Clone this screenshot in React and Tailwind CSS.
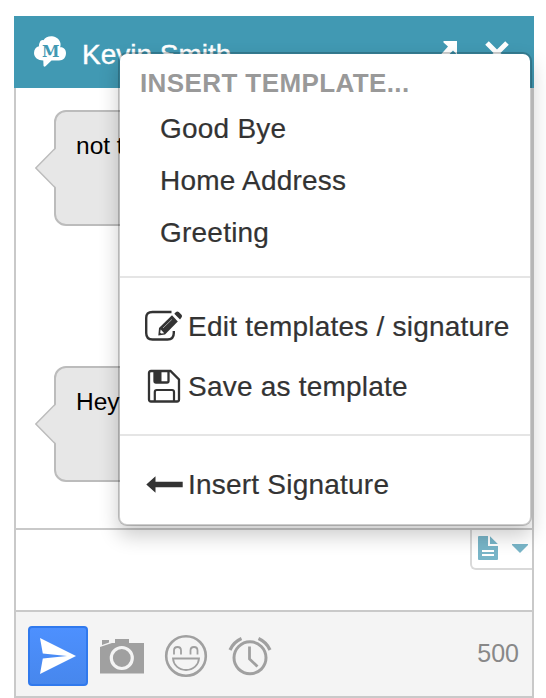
import React from "react";

const LogoIcon = () => (
  <svg width="34" height="34" viewBox="0 0 34 34" className="shrink-0">
    <path
      fill="#fff"
      d="M7 7C7.500 5.500 9 4.800 10.500 5.200C12 2.200 15.500 1 19 1.200C23.500 1.500 26.800 4.500 27.500 8.500C27.700 9.700 27.600 11 27.200 12.200C30.500 11.800 33 14.500 33 18C33 22.500 30.500 25.500 26 25.500H18.500L12.500 31.300C11.500 32 10.500 31.600 10.500 30.500L10.300 25.500C5 25.500 1 22.500 1 18C1 14.500 3 12 6 11.300C5.800 9.800 6.200 8.500 7 7Z"
    />
    <text x="9" y="21.700" fontSize="16.500" fontWeight="700" fill="#4199b3" className="font-['DejaVu_Serif',serif]" textLength="17.500" lengthAdjust="spacingAndGlyphs">M</text>
  </svg>
);

const PopOutIcon = () => (
  <svg width="26" height="26" viewBox="0 0 26 26">
    <path d="M6.500 1H20v13.500l-4-4L7 19.500l-4-4L11 6.500 6.500 2.500Z" fill="#fff" />
  </svg>
);

const CloseIcon = () => (
  <svg width="26" height="26" viewBox="0 0 26 26">
    <path d="M3 3l20 20M23 3L3 23" stroke="#fff" strokeWidth="5" />
  </svg>
);

const EditIcon = () => (
  <svg width="40" height="32" viewBox="0 0 40 32" className="shrink-0">
    <path d="M27.500 2H8.500Q2.200 2 2.200 8V23Q2.200 29.500 8.500 29.500H23.500Q29.800 29.500 29.800 23V21" fill="none" stroke="#333" strokeWidth="2.400" />
    <path d="M14.300 25.500L15 18L28 5.300L33.800 11.500L21 24.500Z" fill="#333" />
    <path d="M30.300 3.800L32 2Q33.300.8 34.800 2L37.500 4.700Q38.700 6 37.500 7.500L36 9.500Z" fill="#333" />
    <path d="M16.700 19.500L20.200 23.200L17.200 23.600L16.200 22.700Z" fill="#fff" />
    <path d="M19 18L27.800 9.500" stroke="#bbb" strokeWidth=".8" />
  </svg>
);

const SaveIcon = () => (
  <svg width="34" height="34" viewBox="0 0 34 34" className="shrink-0">
    <path d="M4 2H23.500L32 10.500V30.500Q32 32.500 30 32.500H4Q2 32.500 2 30.500V4Q2 2 4 2Z" fill="none" stroke="#333" strokeWidth="2.300" />
    <path d="M7.500 2V12Q7.500 13.500 9 13.500H20Q21.500 13.500 21.500 12V2" fill="none" stroke="#333" strokeWidth="2.300" />
    <path d="M7 2h7.500v12H7z" fill="#333" />
    <path d="M7.800 32V23Q7.800 21 9.800 21H25Q27 21 27 23V32" fill="none" stroke="#333" strokeWidth="2.200" />
  </svg>
);

const ArrowIcon = () => (
  <svg width="37" height="17" viewBox="0 0 37 17" className="shrink-0">
    <path d="M.3 8.500L9.500.3V5.800H36.700V11.300H9.500V16.700Z" fill="#333" />
  </svg>
);

const DocIcon = () => (
  <svg width="20" height="24" viewBox="0 0 20 24">
    <path d="M1 0H10V10H20V23Q20 24 19 24H1Q0 24 0 23V1Q0 0 1 0Z" fill="#78b5c8" />
    <path d="M12 0.300L19.800 8H12Z" fill="#78b5c8" />
    <path d="M4 14h12v2H4zM4 18h12v2H4z" fill="#fff" />
  </svg>
);

const SendIcon = () => (
  <svg width="38" height="38" viewBox="0 0 38 38">
    <path d="M1 1L37 19L1 37L3.800 21.600L28 19L3.800 16.500Z" fill="#fff" />
  </svg>
);

const CameraIcon = () => (
  <svg width="44" height="36" viewBox="0 0 44 36">
    <path d="M2 2h7v2.500L2 7zM0 9L12 5h3V1h14v4h15v30.500H0Z" fill="#a0a0a0" />
    <circle cx="21.800" cy="20" r="10.500" fill="none" stroke="#f4f4f4" strokeWidth="3.200" />
  </svg>
);

const SmileIcon = () => (
  <svg width="44" height="44" viewBox="0 0 44 44" fill="none" stroke="#a0a0a0">
    <circle cx="22" cy="22" r="19.800" strokeWidth="2.600" />
    <path d="M10 20.500V16.500C10 11.800 17 11.800 17 16.500V20.500M26.500 20.500V16.500C26.500 11.800 33.500 11.800 33.500 16.500V20.500" strokeWidth="1.800" />
    <path d="M9 24.500H35C34.500 31 29.500 36 22 36C14.500 36 9.500 31 9 24.500Z" strokeWidth="1.800" />
  </svg>
);

const ClockIcon = () => (
  <svg width="44" height="42" viewBox="0 0 44 42" fill="none" stroke="#a0a0a0">
    <circle cx="22" cy="22.800" r="16" strokeWidth="3" />
    <path d="M21.500 11.500V24L29.500 31.500" strokeWidth="2.800" />
    <path d="M2 15Q5.500 7 13.500 3.500M42 15Q38.500 7 30.500 3.500" strokeWidth="3.200" />
  </svg>
);

const Bubble = ({ children }) => (
  <div className="relative ml-[38px] h-[116px] w-[440px] rounded-[12px] border-2 border-[#bcbcbc] bg-[#e7e7e7] px-5 pt-[19px] text-[24.500px] leading-[30px] text-black">
    <svg width="22" height="42" viewBox="0 0 22 42" className="absolute -left-[21px] top-[35px]">
      <path d="M21.500 1L1 21L21.500 41Z" fill="#e7e7e7" />
      <path d="M20 1.500L.8 21L20 40.500" fill="none" stroke="#bcbcbc" strokeWidth="1.500" />
    </svg>
    {children}
  </div>
);

const Menu = () => (
  <div className="absolute left-[118px] top-[52px] h-[474px] w-[414px] rounded-[9px] border-2 border-black/20 bg-white bg-clip-padding text-[28px] tracking-[0.22px] text-[#333] shadow-[0_10px_20px_rgba(0,0,0,0.2)] [-webkit-text-stroke:0.2px_#333]">
    <div className="pl-5 pt-[13px] text-[26px] font-bold leading-[32px] tracking-[0.4px] text-[#999] [-webkit-text-stroke:0px]">INSERT TEMPLATE...</div>
    <ul className="pl-10 pt-1 leading-[52px]">
      <li>Good Bye</li>
      <li>Home Address</li>
      <li>Greeting</li>
    </ul>
    <hr className="mt-[17px] border-t-2 border-[#e5e5e5]" />
    <ul className="whitespace-nowrap pt-[18px]">
      <li className="flex h-[60px] items-center pl-6"><EditIcon /><span className="ml-1 pt-0.5">Edit templates / signature</span></li>
      <li className="flex h-[60px] items-center pl-[27px]"><SaveIcon /><span className="ml-[7px] pt-0.5">Save as template</span></li>
    </ul>
    <hr className="mt-[18px] border-t-2 border-[#e5e5e5]" />
    <div className="flex h-[78px] items-center pl-[26px] pt-[18px]"><ArrowIcon /><span className="ml-[5px] pt-0.5">Insert Signature</span></div>
  </div>
);

export default function App() {
  return (
    <div className="relative h-[698px] w-[546px] overflow-hidden bg-white pl-[14px] pt-4 font-['Liberation_Sans',Arial,sans-serif]">
      <div className="flex h-[682px] w-[520px] flex-col">
        <header className="flex h-[72px] shrink-0 items-center bg-[#4199b3] pl-[19px] pr-6 text-[28px] text-white">
          <LogoIcon />
          <span className="ml-[15px] pt-1.5 [-webkit-text-stroke:0.4px_white]">Kevin Smith</span>
          <div className="ml-auto flex items-center gap-[21px] pt-0.5"><PopOutIcon /><CloseIcon /></div>
        </header>
        <div className="flex flex-1 flex-col border-x-2 border-b-2 border-[#c9c9c9]">
          <main className="h-[442px] shrink-0 border-b-2 border-[#c9c9c9] pt-[22px]">
            <Bubble>not t</Bubble>
            <div className="h-[140px]" />
            <Bubble>Hey</Bubble>
          </main>
          <div className="flex h-[82px] shrink-0 items-start justify-end border-b-2 border-[#c9c9c9]">
            <div className="flex h-10 w-[62px] items-start rounded-bl-[6px] border-b-2 border-l-2 border-[#d9d9d9] pl-[6px] pt-[6px]">
              <DocIcon />
              <svg width="16" height="9" viewBox="0 0 16 9" className="ml-[14px] mt-2"><path d="M0 0h16v1L8 9 0 1Z" fill="#78b5c8" /></svg>
            </div>
          </div>
          <footer className="flex flex-1 items-center bg-[#f4f4f4] pl-3 pr-[13px]">
            <button className="mt-1 flex h-[60px] w-[60px] items-center justify-center rounded-[4px] border-2 border-[#3079ed] bg-linear-to-b from-[#4d90fe] to-[#4787ed]"><SendIcon /></button>
            <span className="ml-3 mt-1"><CameraIcon /></span>
            <span className="ml-5 mt-1"><SmileIcon /></span>
            <span className="ml-5 mt-1"><ClockIcon /></span>
            <span className="ml-auto text-[25px] text-[#888]">500</span>
          </footer>
        </div>
      </div>
      <Menu />
    </div>
  );
}
